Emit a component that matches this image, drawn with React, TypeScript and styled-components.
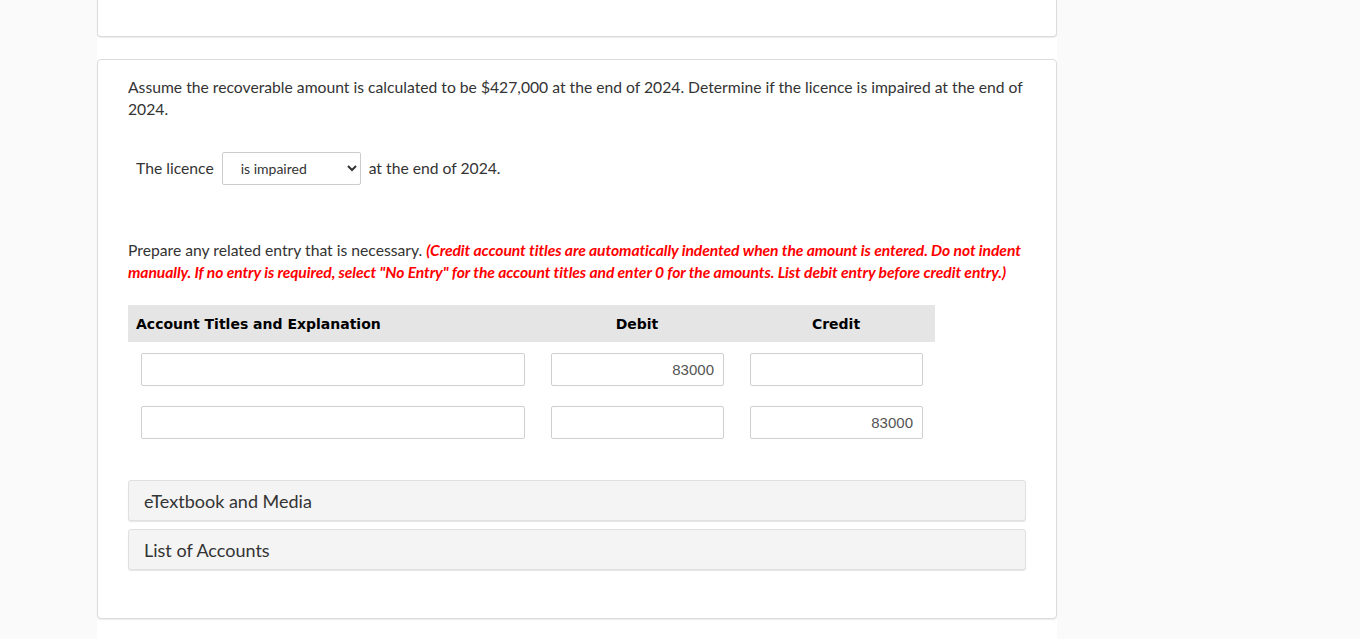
import React from "react";
import styled, { createGlobalStyle } from "styled-components";

const GlobalStyle = createGlobalStyle`
  html, body {
    margin: 0;
    padding: 0;
    background: #fafafa;
  }
  body {
    font-family: Lato, "Open Sans", sans-serif;
    color: #333;
  }
  * { box-sizing: border-box; }
`;

const Column = styled.div`
  width: 960px;
  margin-left: 97px;
  background: #ffffff;
  min-height: 639px;
`;

const Card = styled.section<{ $top?: boolean }>`
  background: #fff;
  border: 1px solid #dcdcdc;
  border-radius: 4px;
  box-shadow: 0 1px 1px rgba(0, 0, 0, 0.08);
  ${(p) =>
    p.$top
      ? `
    height: 37px;
    border-top: none;
    border-top-left-radius: 0;
    border-top-right-radius: 0;
    margin-bottom: 22px;
  `
      : `
    padding: 16px 30px 48px;
  `}
`;

const Paragraph = styled.p`
  margin: 0;
  font-size: 15.7px;
  line-height: 22px;
  color: #333;
`;

const SelectRow = styled.div`
  display: flex;
  align-items: center;
  gap: 8px;
  height: 32px;
  margin-top: 32px;
  padding-left: 8px;
  font-size: 15.7px;
  color: #333;
`;

const Select = styled.select`
  width: 139px;
  height: 33px;
  border: 1px solid #cccccc;
  border-radius: 2px;
  background: #fff;
  padding: 0 6px 0 14px;
  font-family: Lato, sans-serif;
  font-size: 14px;
  color: #333;
`;

const Instructions = styled(Paragraph)`
  margin-top: 55px;
`;

const Red = styled.span`
  color: #ff0000;
  font-weight: 700;
  font-style: italic;
  letter-spacing: -0.1px;
`;

const Table = styled.div`
  width: 807px;
  margin-top: 22px;
  display: grid;
  grid-template-columns: 409px 200px 198px;
`;

const HeadCell = styled.div<{ $align?: string }>`
  height: 37px;
  background: #e5e5e5;
  display: flex;
  align-items: center;
  justify-content: ${(p) => p.$align || "flex-start"};
  padding-left: ${(p) => (p.$align ? "0" : "8px")};
  font-family: "DejaVu Sans", Verdana, sans-serif;
  font-weight: 700;
  font-size: 14px;
  color: #000;
`;

const Cell = styled.div<{ $pl: number }>`
  padding: 11px 0 9px ${(p) => p.$pl}px;
`;

const Field = styled.input<{ $w: number }>`
  display: block;
  width: ${(p) => p.$w}px;
  height: 33px;
  border: 1px solid #cfcfcf;
  border-radius: 2px;
  background: #fff;
  padding: 0 9px;
  text-align: right;
  font-family: "Liberation Sans", Arial, sans-serif;
  font-size: 15px;
  color: #555;
  outline: none;
`;

const Accordions = styled.div`
  margin-top: 32px;
  display: flex;
  flex-direction: column;
  gap: 8px;
`;

const Panel = styled.div`
  height: 41px;
  background: #f4f4f4;
  border: 1px solid #e0e0e0;
  border-radius: 3px;
  box-shadow: 0 1px 1px rgba(0, 0, 0, 0.1);
  display: flex;
  align-items: center;
  padding-left: 15px;
  font-size: 18px;
  color: #333;
`;

const rows = [
  { debit: "83000", credit: "" },
  { debit: "", credit: "83000" },
];

export default function App() {
  return (
    <>
      <GlobalStyle />
      <Column>
        <Card $top />
        <Card>
          <Paragraph>
            Assume the recoverable amount is calculated to be $427,000 at the end of 2024. Determine if the
            licence is impaired at the end of 2024.
          </Paragraph>
          <SelectRow>
            <span>The licence</span>
            <Select defaultValue="is impaired">
              <option value="is impaired">is impaired</option>
              <option value="is not impaired">is not impaired</option>
            </Select>
            <span>at the end of 2024.</span>
          </SelectRow>
          <Instructions>
            Prepare any related entry that is necessary.{" "}
            <Red>
              (Credit account titles are automatically indented when the amount is entered. Do not indent
              manually. If no entry is required, select "No Entry" for the account titles and enter 0 for the
              amounts. List debit entry before credit entry.)
            </Red>
          </Instructions>
          <Table>
            <HeadCell>Account Titles and Explanation</HeadCell>
            <HeadCell $align="center">Debit</HeadCell>
            <HeadCell $align="center">Credit</HeadCell>
            {rows.map((r, i) => (
              <React.Fragment key={i}>
                <Cell $pl={13}>
                  <Field $w={384} defaultValue="" />
                </Cell>
                <Cell $pl={14}>
                  <Field $w={173} defaultValue={r.debit} />
                </Cell>
                <Cell $pl={13}>
                  <Field $w={173} defaultValue={r.credit} />
                </Cell>
              </React.Fragment>
            ))}
          </Table>
          <Accordions>
            <Panel>eTextbook and Media</Panel>
            <Panel>List of Accounts</Panel>
          </Accordions>
        </Card>
      </Column>
    </>
  );
}
